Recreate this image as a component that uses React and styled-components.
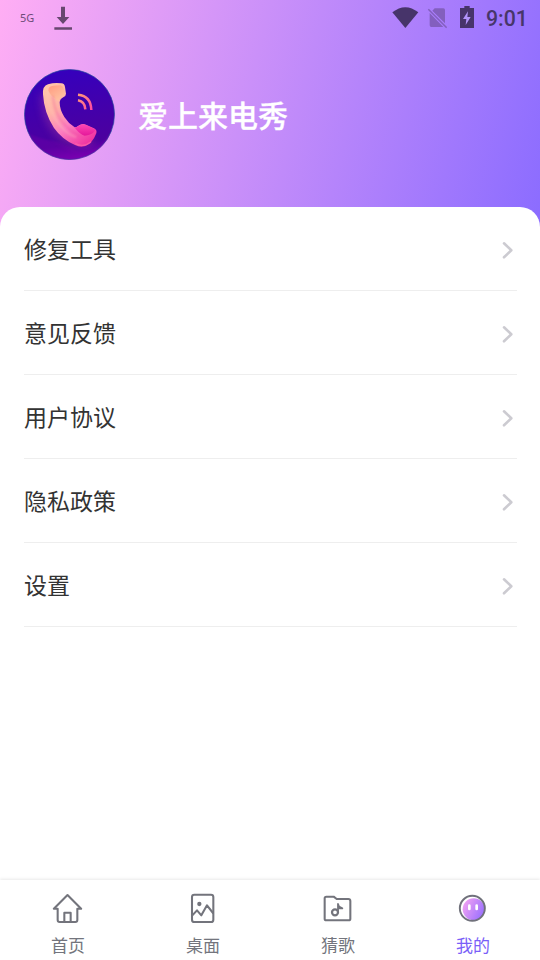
import React from 'react';
import styled, { createGlobalStyle } from 'styled-components';

const GlobalStyle = createGlobalStyle`
  * { box-sizing: border-box; }
  body {
    margin: 0;
    background: #fff;
    font-family: "Noto Sans CJK SC", sans-serif;
  }
`;

const Screen = styled.div`
  display: flex;
  flex-direction: column;
  width: 540px;
  height: 960px;
  overflow: hidden;
  background: #fff;
`;

const Header = styled.header`
  flex: none;
  height: 231px;
  background: linear-gradient(104deg, #ffaef4 0%, #8b6cff 100%);
`;

const StatusBar = styled.div`
  display: flex;
  align-items: center;
  justify-content: space-between;
  height: 36px;
  padding: 0 13px 0 20px;
`;

const StatusGroup = styled.div`
  display: flex;
  align-items: center;
  height: 36px;
`;

const Network = styled.span`
  width: 33px;
  font: 11px/36px "Noto Sans", sans-serif;
  color: #6d4c78;
`;

const Clock = styled.time`
  width: 41px;
  margin-left: 12px;
  padding-top: 2px;
  font: 500 21.3px/36px Roboto, sans-serif;
  color: #47366a;
  white-space: nowrap;
`;

const StatusIcon = styled.svg`
  display: block;
  flex: none;
  width: ${(p) => p.$width}px;
  height: 36px;
  margin-left: ${(p) => p.$gap || 0}px;
`;

const Profile = styled.div`
  display: flex;
  align-items: center;
  gap: 23px;
  padding: 33px 24px 0;
`;

const Avatar = styled.svg`
  display: block;
  flex: none;
  width: 91px;
  height: 91px;
`;

const Name = styled.h1`
  margin: 0 0 2px;
  font-size: 30px;
  line-height: 44px;
  font-weight: 500;
  color: #fff;
  -webkit-text-stroke: 0.3px #fff;
`;

const Sheet = styled.main`
  flex: 1;
  margin-top: -24px;
  padding: 0 23px 0 24px;
  border-radius: 20px 20px 0 0;
  background: #fff;
`;

const MenuRow = styled.div`
  display: flex;
  align-items: center;
  justify-content: space-between;
  height: 84px;
  padding-right: 4px;
  border-bottom: 1px solid #eeeeee;
`;

const MenuLabel = styled.span`
  margin-bottom: 2px;
  font-size: 23px;
  line-height: 34px;
  color: #333;
`;

const Chevron = styled.svg`
  display: block;
  width: 12px;
  height: 18px;
  margin-top: 3px;
`;

const TabBar = styled.nav`
  display: grid;
  grid-template-columns: repeat(4, 1fr);
  flex: none;
  height: 80px;
  background: #fff;
  box-shadow: 0 -1px 3px rgba(0, 0, 0, 0.09);
`;

const Tab = styled.div`
  display: flex;
  flex-direction: column;
  align-items: center;
  padding-top: 13px;
  color: ${(p) => (p.$active ? '#7a5ff8' : '#73757d')};
`;

const TabIcon = styled.svg`
  display: block;
  width: 31px;
  height: 31px;
`;

const TabLabel = styled.span`
  margin-top: 8px;
  padding-left: 1px;
  font-size: 17px;
  line-height: 25px;
`;

const stroke = {
  fill: 'none',
  stroke: '#73747c',
  strokeWidth: 6.2,
  strokeLinejoin: 'round',
  strokeLinecap: 'round',
};

const HomeIcon = () => (
  <TabIcon viewBox="66 69 93 93" {...stroke}>
    <path d="M83 116H71.5L112.5 75L153.5 116H142V150Q142 156 136 156H89Q83 156 83 150Z" />
    <path d="M103 155V128H122V155" />
  </TabIcon>
);

const DesktopIcon = () => (
  <TabIcon viewBox="471 69 93 93" {...stroke}>
    <rect x="486" y="74" width="64" height="82" rx="7" />
    <path d="M487 136L501 121L514 136L531 106L549 129" />
    <circle cx="508" cy="102" r="6.5" fill="#73747c" stroke="none" />
  </TabIcon>
);

const MusicIcon = () => (
  <TabIcon viewBox="66 69 93 93" {...stroke}>
    <path d="M74 147V85Q74 80 79 80H101L110 87H145Q151 87 151 93V146Q151 151 146 151H79Q74 151 74 146Z" />
    <circle cx="105" cy="127" r="9" strokeWidth="6.8" />
    <path d="M114 127V102L117 110L127 115H115" strokeWidth="5.5" />
  </TabIcon>
);

const MeIcon = () => (
  <TabIcon viewBox="471 69 93 93">
    <defs>
      <linearGradient id="face" x1="0" y1="0.2" x2="1" y2="0.7">
        <stop offset="0" stopColor="#f3a2f2" />
        <stop offset="1" stopColor="#986fff" />
      </linearGradient>
    </defs>
    <circle cx="517" cy="115" r="37" fill="#fff" />
    <circle cx="521" cy="118" r="33" fill="url(#face)" />
    <circle cx="517" cy="115" r="37.5" fill="none" stroke="#70717b" strokeWidth="5.8" />
    <rect x="504" y="103" width="8" height="18" rx="4" fill="#fff" />
    <rect x="526" y="103" width="8" height="18" rx="4" fill="#fff" />
  </TabIcon>
);

const PhoneAvatar = () => (
  <Avatar viewBox="27 27 273 273">
    <defs>
      <linearGradient id="disc" x1="0.4" y1="0" x2="0.55" y2="1">
        <stop offset="0" stopColor="#3500bd" />
        <stop offset="0.55" stopColor="#4500a8" />
        <stop offset="0.83" stopColor="#4c009f" />
        <stop offset="1" stopColor="#7c00b4" />
      </linearGradient>
      <linearGradient id="handset" x1="0.1" y1="0" x2="0.8" y2="1">
        <stop offset="0" stopColor="#ffc8a9" />
        <stop offset="0.35" stopColor="#ffb0a8" />
        <stop offset="0.62" stopColor="#fc7fc1" />
        <stop offset="1" stopColor="#f0309f" />
      </linearGradient>
      <linearGradient id="earpiece" x1="0" y1="0" x2="0.7" y2="1">
        <stop offset="0" stopColor="#ff9a80" />
        <stop offset="1" stopColor="#ffc5a3" />
      </linearGradient>
      <linearGradient id="mouthpiece" x1="0" y1="0" x2="0" y2="1">
        <stop offset="0" stopColor="#ff47b4" />
        <stop offset="1" stopColor="#e4189a" />
      </linearGradient>
      <linearGradient id="waves" x1="0" y1="0" x2="1" y2="1">
        <stop offset="0" stopColor="#ff9b77" />
        <stop offset="1" stopColor="#ff48a2" />
      </linearGradient>
      <filter id="glow" x="-30%" y="-30%" width="160%" height="160%">
        <feGaussianBlur stdDeviation="12" />
      </filter>
      <filter id="soft">
        <feGaussianBlur stdDeviation="3" />
      </filter>
      <clipPath id="round">
        <circle cx="163.5" cy="163.5" r="136.5" />
      </clipPath>
    </defs>
    <circle cx="163.5" cy="163.5" r="135" fill="url(#disc)" stroke="#204d9a" strokeWidth="2" />
    <g clipPath="url(#round)">
      <path d="M25 215Q75 237 115 243Q160 253 190 276Q240 292 284 220V310H25Z" fill="#7900ad" opacity="0.35" filter="url(#soft)" />
      <path d="M92 100Q92 176 135 216Q182 257 230 239" fill="none" stroke="#a43a9b" strokeWidth="30" opacity="0.45" filter="url(#glow)" />
    </g>
    <path d="M84 103Q82 78 99 73Q118 67 139 70Q149 71 150 81L153 101Q153 108 145 112Q135 117 134 127Q134 149 148 171Q160 190 179 202Q184 202 190 197Q202 189 213 194L237 205Q247 210 244 220Q239 235 226 250Q203 267 180 255Q142 239 117 204Q87 158 84 103Z" fill="url(#handset)" />
    <path d="M100 92Q99 78 115 77L136 76Q144 77 146 86L150 101Q150 107 141 110Q132 114 130 124L117 113Q105 104 100 92Z" fill="url(#earpiece)" />
    <path d="M99 85Q94 125 111 157Q124 188 151 213Q163 225 184 232" fill="none" stroke="#ffd0bc" strokeWidth="5" opacity="0.35" filter="url(#soft)" />
    <path d="M113 107Q118 150 137 179Q159 209 197 231" fill="none" stroke="#e94891" strokeWidth="4" opacity="0.4" filter="url(#soft)" />
    <path d="M179 203Q186 202 192 197Q203 190 213 195L237 206Q243 209 237 216Q227 226 209 227Q195 223 179 203Z" fill="url(#mouthpiece)" />
    <path d="M181 251Q206 264 228 245" fill="none" stroke="#ff6aae" strokeWidth="4" opacity="0.6" />
    <path d="M189 104Q228 108 229 150M189 121Q210 125 211 148" fill="none" stroke="url(#waves)" strokeWidth="7.5" />
  </Avatar>
);

const menu = ['修复工具', '意见反馈', '用户协议', '隐私政策', '设置'];

const tabs = [
  { label: '首页', Icon: HomeIcon },
  { label: '桌面', Icon: DesktopIcon },
  { label: '猜歌', Icon: MusicIcon },
  { label: '我的', Icon: MeIcon, active: true },
];

export default function App() {
  return (
    <Screen>
      <GlobalStyle />
      <Header>
        <StatusBar>
          <StatusGroup>
            <Network>5G</Network>
            <StatusIcon $width={20} viewBox="159 0 60 108" fill="#67476f">
              <path d="M183 20H195V51H208L189 72L170 51H183ZM163 82H216V89H163Z" />
            </StatusIcon>
          </StatusGroup>
          <StatusGroup>
            <StatusIcon $width={28} viewBox="36 0 84 108" fill="#47346a">
              <path d="M37 37Q76 6 115 37L76 84Z" />
            </StatusIcon>
            <StatusIcon $width={20} $gap={7} viewBox="141 0 60 108" fill="#835fbe">
              <path d="M164 25H190Q195 25 195 30V70L157 32ZM149 39L190 81H154Q149 81 149 76Z" />
              <path d="M145 28L200 83" fill="none" stroke="#835fbe" strokeWidth="4.5" />
            </StatusIcon>
            <StatusIcon $width={14} $gap={13} viewBox="243 0 42 108">
              <path d="M256 18H272V24H285V84H243V24H256Z" fill="#47346a" />
              <path d="M267 34L252 57H262L260 75L275 51H265Z" fill="#b294fa" />
            </StatusIcon>
            <Clock>9:01</Clock>
          </StatusGroup>
        </StatusBar>
        <Profile>
          <PhoneAvatar />
          <Name>爱上来电秀</Name>
        </Profile>
      </Header>
      <Sheet>
        {menu.map((label) => (
          <MenuRow key={label}>
            <MenuLabel>{label}</MenuLabel>
            <Chevron viewBox="0 0 12 18" fill="none" stroke="#cccbd1" strokeWidth="2.6" strokeLinecap="round" strokeLinejoin="round">
              <path d="M3 2.3L10.3 9.3L3 16.3" />
            </Chevron>
          </MenuRow>
        ))}
      </Sheet>
      <TabBar>
        {tabs.map(({ label, Icon, active }) => (
          <Tab key={label} $active={active}>
            <Icon />
            <TabLabel>{label}</TabLabel>
          </Tab>
        ))}
      </TabBar>
    </Screen>
  );
}
